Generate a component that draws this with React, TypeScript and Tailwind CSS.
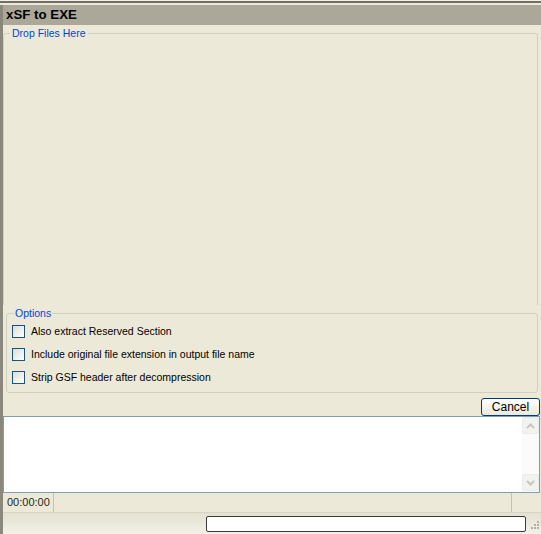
import React from "react";

function CheckRow({ label }: { label: string }) {
  return (
    <div className="flex items-center h-[23px] pl-[5px] pt-[1px]">
      <div className="w-[13px] h-[13px] border border-[#1c5180] bg-gradient-to-br from-[#dcdcd7] to-[#ffffff]" />
      <span className="ml-[6px] text-[10.5px] text-black leading-none">{label}</span>
    </div>
  );
}

export default function App() {
  return (
    <div
      className="w-[541px] h-[534px] bg-[#ece9d8] flex flex-col overflow-hidden"
      style={{ fontFamily: '"Liberation Sans", Arial, sans-serif' }}
    >
      {/* top edge */}
      <div className="h-[1px] bg-[#f4f2e8]" />
      <div className="h-[2px] bg-[#716f64]" />
      <div className="h-[2px] bg-[#ece9d8]" />
      <div className="flex-1 flex border-l-[3px] border-[#8a887c] min-h-0">
        <div className="flex-1 flex flex-col min-w-0">
          {/* title */}
          <div className="h-[20px] bg-[#aca899] flex items-center pl-[3px] text-[13.3px] font-bold text-black">
            xSF to EXE
          </div>
          {/* drop group */}
          <div className="relative mt-[8px] ml-[0px] mr-[3px] h-[272px] border-t border-r border-l border-[#d0d0bf] rounded-t-[3px]">
            <span className="absolute -top-[7px] left-[6px] px-[2px] bg-[#ece9d8] text-[10.5px] leading-[13px] text-[#0046d5]">
              Drop Files Here
            </span>
          </div>
          {/* options group */}
          <div className="relative mt-[8px] ml-[3px] mr-[3px] h-[80px] border border-[#d0d0bf] rounded-[3px] pt-[5px]">
            <span className="absolute -top-[7px] left-[7px] px-[1px] bg-[#ece9d8] text-[10.5px] leading-[13px] text-[#0046d5]">
              Options
            </span>
            <CheckRow label="Also extract Reserved Section" />
            <CheckRow label="Include original file extension in output file name" />
            <CheckRow label="Strip GSF header after decompression" />
          </div>
          {/* cancel row */}
          <div className="flex justify-end h-[23px] items-end pr-[1px]">
            <button className="w-[59px] h-[18px] border border-[#003c74] rounded-[3px] bg-gradient-to-b from-[#ffffff] to-[#ece9d8] text-[12px] leading-none text-black">
              Cancel
            </button>
          </div>
          {/* output box */}
          <div className="h-[77px] mr-[1px] border border-[#7f9db9] bg-white flex justify-end">
            <div className="w-[17px] flex flex-col justify-between bg-[#fbfbf9] pb-[1px]">
              <div className="h-[17px] border border-[#e8ebf0] rounded-[2px] bg-[#f3f3ee] flex items-center justify-center">
                <svg width="9" height="6" viewBox="0 0 9 6">
                  <path d="M1 5 L4.5 1.5 L8 5" stroke="#c9c7ba" strokeWidth="2" fill="none" />
                </svg>
              </div>
              <div className="h-[17px] border border-[#e8ebf0] rounded-[2px] bg-[#f3f3ee] flex items-center justify-center">
                <svg width="9" height="6" viewBox="0 0 9 6">
                  <path d="M1 1 L4.5 4.5 L8 1" stroke="#c9c7ba" strokeWidth="2" fill="none" />
                </svg>
              </div>
            </div>
          </div>
          {/* status strip */}
          <div className="h-[19px] flex items-stretch text-[11px] text-[#1c2a1c]">
            <div className="w-[51px] border-r border-[#c5c2b2] flex items-center pl-[4px]">00:00:00</div>
            <div className="flex-1" />
            <div className="w-[30px] border-l border-[#c5c2b2]" />
          </div>
          {/* bottom bar */}
          <div className="flex-1 flex items-start border-t border-[#d8d5c5] bg-gradient-to-b from-[#e4e1d2] to-[#f3f1e6]">
            <div className="flex-1" />
            <div className="mt-[3px] w-[320px] h-[16px] border border-[#3b3b3b] rounded-[2px] bg-white" />
            <div className="w-[15px] h-full relative">
              <svg className="absolute right-[1px] bottom-[2px]" width="12" height="12" viewBox="0 0 12 12">
                <g fill="#b5b29f">
                  <rect x="9" y="1" width="2" height="2" />
                  <rect x="6" y="4" width="2" height="2" />
                  <rect x="9" y="4" width="2" height="2" />
                  <rect x="3" y="7" width="2" height="2" />
                  <rect x="6" y="7" width="2" height="2" />
                  <rect x="9" y="7" width="2" height="2" />
                </g>
              </svg>
            </div>
          </div>
        </div>
      </div>
    </div>
  );
}
